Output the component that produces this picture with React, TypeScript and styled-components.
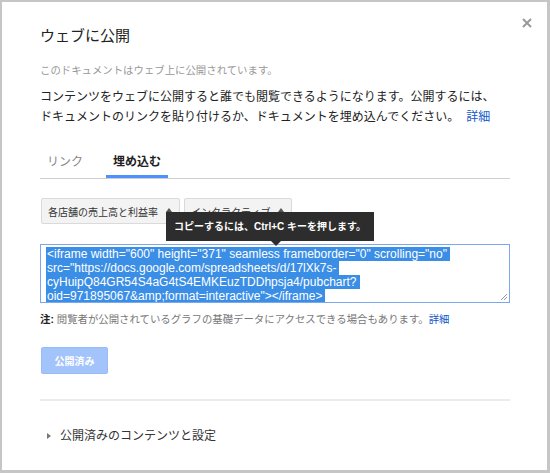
import React, { useState } from 'react';
import styled, { createGlobalStyle } from 'styled-components';

const GlobalStyle = createGlobalStyle`
  body {
    margin: 0;
    background: #fff;
    font-family: "Liberation Sans", "Noto Sans CJK JP", sans-serif;
  }
`;

const EMBED_LINES = [
  '<iframe width="600" height="371" seamless frameborder="0" scrolling="no"',
  'src="https://docs.google.com/spreadsheets/d/17lXk7s-',
  'cyHuipQ84GR54S4aG4tS4EMKEuzTDDhpsja4/pubchart?',
  'oid=971895067&amp;format=interactive"></iframe>',
];

function App() {
  const [tab, setTab] = useState('embed');
  return (
    <>
      <GlobalStyle />
      <Dialog>
        <CloseButton aria-label="閉じる">
          <svg width="10" height="10" viewBox="0 0 10 10">
            <path d="M1 1L9 9M9 1L1 9" stroke="#999" strokeWidth="2" />
          </svg>
        </CloseButton>
        <Title>ウェブに公開</Title>
        <Status>このドキュメントはウェブ上に公開されています。</Status>
        <Description>
          コンテンツをウェブに公開すると誰でも閲覧できるようになります。公開するには、
          <br />
          ドキュメントのリンクを貼り付けるか、ドキュメントを埋め込んでください。<Link $gap>詳細</Link>
        </Description>

        <Tabs>
          <Tab $active={tab === 'link'} onClick={() => setTab('link')}>
            リンク
          </Tab>
          <Tab $active={tab === 'embed'} onClick={() => setTab('embed')}>
            埋め込む
          </Tab>
        </Tabs>

        <SelectRow>
          <Select>
            各店舗の売上高と利益率
            <Arrow />
          </Select>
          <Select>
            インタラクティブ
            <Arrow />
          </Select>
          <Tooltip>コピーするには、Ctrl+C キーを押します。</Tooltip>
        </SelectRow>

        <CodeBox role="textbox">
          {EMBED_LINES.map((line) => (
            <CodeLine key={line}>
              <Selected>{line}</Selected>
            </CodeLine>
          ))}
          <Grip width="9" height="9" viewBox="0 0 9 9">
            <path d="M8 2L2 8M8 5L5 8" stroke="#999" strokeWidth="1" />
          </Grip>
        </CodeBox>

        <Note>
          <strong>注:</strong> 閲覧者が公開されているグラフの基礎データにアクセスできる場合もあります。
          <Link>詳細</Link>
        </Note>

        <PublishedButton disabled>公開済み</PublishedButton>

        <Divider />

        <Expander>
          <ExpandArrow />
          公開済みのコンテンツと設定
        </Expander>
      </Dialog>
    </>
  );
}

const Dialog = styled.div`
  position: relative;
  box-sizing: border-box;
  width: 550px;
  height: 473px;
  padding: 24px 37px 0 38px;
  background: #fff;
  border-style: solid;
  border-color: #c6c6c6;
  border-width: 2px 3px 3px 2px;
  overflow: hidden;
`;

const CloseButton = styled.button`
  position: absolute;
  top: 14px;
  right: 13px;
  display: flex;
  align-items: center;
  justify-content: center;
  width: 14px;
  height: 14px;
  padding: 0;
  border: none;
  background: none;
  cursor: pointer;
`;

const Title = styled.h1`
  margin: 0;
  font-size: 15px;
  font-weight: normal;
  line-height: 20px;
  color: #222;
`;

const Status = styled.p`
  margin: 18px 0 0;
  font-size: 10.4px;
  line-height: 14px;
  color: #999;
`;

const Description = styled.p`
  margin: 9px 0 0;
  font-size: 12px;
  line-height: 20px;
  color: #222;
`;

const Link = styled.a<{ $gap?: boolean }>`
  margin-left: ${(props) => (props.$gap ? '7px' : '0')};
  color: #15c;
  cursor: pointer;
`;

const Tabs = styled.div`
  display: flex;
  gap: 16px;
  margin-top: 20px;
  border-bottom: 1px solid #cfcfcf;
`;

const Tab = styled.div<{ $active: boolean }>`
  height: 31px;
  padding: 0 7px;
  line-height: 31px;
  font-size: 12px;
  font-weight: ${(props) => (props.$active ? 'bold' : 'normal')};
  color: ${(props) => (props.$active ? '#222' : '#888')};
  box-shadow: ${(props) => (props.$active ? 'inset 0 -3px 0 #4d90fe' : 'none')};
  cursor: pointer;
`;

const SelectRow = styled.div`
  position: relative;
  display: flex;
  gap: 3px;
  margin-top: 19px;
`;

const Select = styled.div`
  display: flex;
  align-items: center;
  gap: 8px;
  box-sizing: border-box;
  height: 26px;
  padding: 0 7px 0 6px;
  margin-left: 1px;
  font-size: 10px;
  color: #333;
  background: #f3f3f3;
  border: 1px solid #dadada;
  border-radius: 2px;
`;

const Arrow = styled.span`
  width: 0;
  height: 0;
  border-left: 3px solid transparent;
  border-right: 3px solid transparent;
  border-bottom: 4px solid #555;
  margin-top: -2px;
`;

const Tooltip = styled.div`
  position: absolute;
  top: 14px;
  left: 126px;
  padding: 8px 8px;
  font-size: 10px;
  font-weight: bold;
  line-height: 13px;
  color: #fff;
  white-space: nowrap;
  background: #2d2d2d;
  z-index: 2;

  &::after {
    content: '';
    position: absolute;
    top: 100%;
    left: 105px;
    border-left: 5px solid transparent;
    border-right: 5px solid transparent;
    border-top: 5px solid #2d2d2d;
  }
`;

const CodeBox = styled.div`
  position: relative;
  box-sizing: border-box;
  height: 59px;
  margin-top: 20px;
  padding: 2px 5px 0 6px;
  border: 1px solid #7aa7ef;
  font-family: "Liberation Sans", Arial, sans-serif;
  font-size: 12px;
  line-height: 14px;
  overflow: hidden;
`;

const CodeLine = styled.div`
  white-space: nowrap;
`;

const Selected = styled.span`
  display: inline-block;
  padding-right: 3px;
  margin-left: -1px;
  padding-left: 1px;
  color: #fff;
  background: #3a8ee6;
`;

const Grip = styled.svg`
  position: absolute;
  right: 1px;
  bottom: 1px;
`;

const Note = styled.p`
  margin: 10px 0 0;
  font-size: 10.4px;
  line-height: 14px;
  color: #777;

  strong {
    color: #222;
  }
`;

const PublishedButton = styled.button`
  display: block;
  box-sizing: border-box;
  height: 27px;
  min-width: 67px;
  margin: 20px 0 0 1px;
  padding: 0 12px;
  font-family: inherit;
  font-size: 10px;
  font-weight: bold;
  color: #fff;
  background: #a3c3fb;
  border: 1px solid #98bbf8;
  border-radius: 2px;
`;

const Divider = styled.hr`
  margin: 25px 0 0;
  height: 2px;
  border: none;
  background: #ececec;
`;

const Expander = styled.div`
  display: flex;
  align-items: center;
  gap: 9px;
  margin-top: 27px;
  padding-left: 7px;
  font-size: 12px;
  line-height: 16px;
  color: #333;
  cursor: pointer;
`;

const ExpandArrow = styled.span`
  width: 0;
  height: 0;
  border-top: 3px solid transparent;
  border-bottom: 3px solid transparent;
  border-left: 4px solid #777;
`;

export default App;
